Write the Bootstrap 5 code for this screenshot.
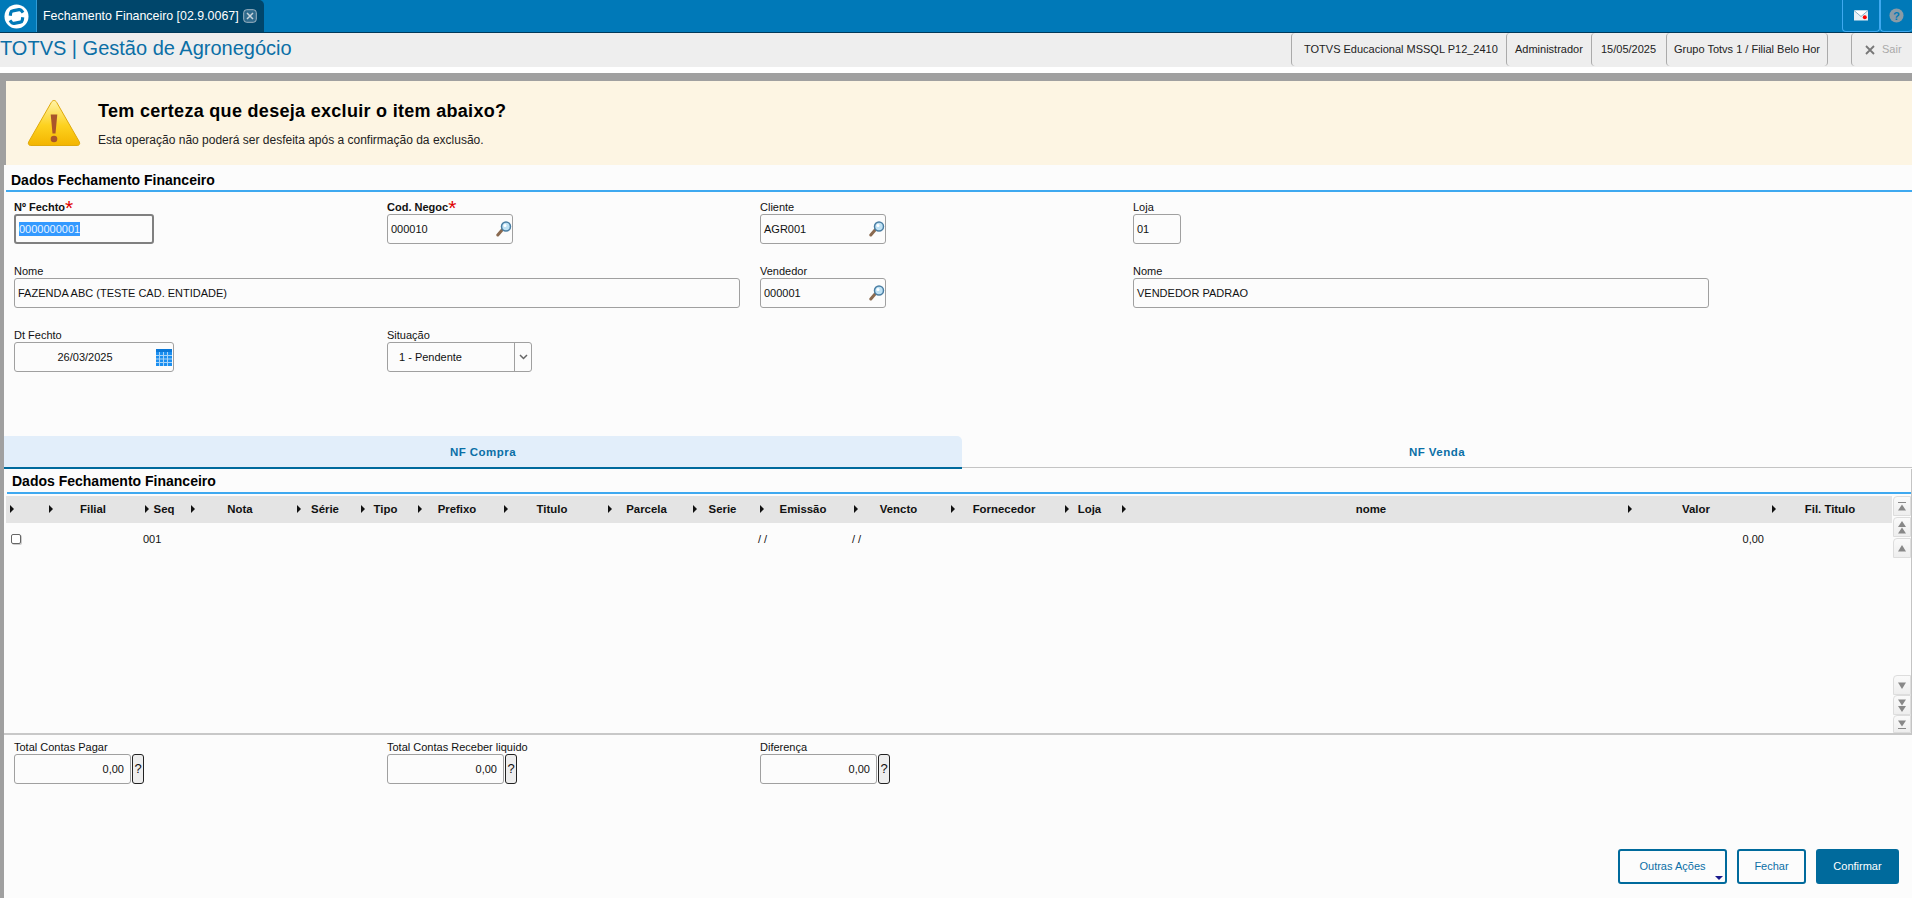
<!DOCTYPE html>
<html lang="pt-BR">
<head>
<meta charset="utf-8">
<title>Fechamento Financeiro</title>
<link href="https://cdn.jsdelivr.net/npm/bootstrap@5.3.0/dist/css/bootstrap.min.css" rel="stylesheet">
<style>
html,body{height:100%;}
body{font-family:"Liberation Sans",Arial,sans-serif;font-size:11px;color:#111;background:#fff;overflow:hidden;}
.topbar{height:33px;background:#0079b8;border-bottom:1px solid #00395a;}
.logo-box{width:36px;height:32px;padding-right:4px;}
.app-tab{width:228px;height:32px;background:#00466b;color:#fff;font-size:12.4px;padding-left:6px;border-radius:0 5px 0 0;gap:4px;border-left:1px solid #2f9bd6;}
.top-btn{height:32px;border:1px solid #3fa9f0;border-top:0;border-radius:0 0 4px 4px;}
.top-mail{width:38px;}
.top-help{width:32px;border-right:0;}
.subbar{height:34px;background:#eee;}
.sub-title{font-size:20px;color:#0b6fa6;line-height:30px;padding-top:0;white-space:nowrap;}
.sub-cell{height:33px;border-left:1px solid #aaa;border-radius:4px 0 0 4px;font-size:11px;color:#222;white-space:nowrap;overflow:hidden;padding-left:12px;}
.c1{width:215px;}.c2{width:85px;padding-left:8px;}.c3{width:75px;padding-left:9px;}.c4{width:162px;padding-left:7px;border-right:1px solid #aaa;border-radius:4px;}
.c5{width:61px;margin-left:23px;color:#aaa;padding-left:13px;gap:7px;}
.gap-white{height:6px;background:#fff;}
.workspace{height:825px;background:#a0a0a0;}
.grey-top{height:8px;}
.alert-strip{height:84px;background:#fdf5e3;margin-left:6px;gap:17px;padding-left:21px;}
.alert-title{font-size:18px;font-weight:700;letter-spacing:.3px;color:#000;line-height:22px;margin-bottom:11px;}
.alert-sub{font-size:12px;color:#222;line-height:14px;}
.sheet{height:733px;margin-left:4px;background:#fcfcfc;}
.sec-title{height:27px;border-bottom:2px solid #3fa9f0;margin-left:2px;font-size:14px;font-weight:700;color:#000;padding:7px 0 0 5px;line-height:17px;}
.form-zone{display:grid;grid-template-columns:repeat(4,373px);grid-auto-rows:44px;row-gap:20px;padding:8px 0 0 10px;height:244px;}
.span2{grid-column:span 2;}
.fld-label{display:block;margin:0;font-size:11px;line-height:14px;height:14px;color:#111;white-space:nowrap;}
.req{font-weight:700;}
.req i{color:#e00000;font-style:normal;font-size:21px;line-height:10px;font-weight:400;vertical-align:-4px;}
.fld{height:30px;min-height:30px;border:1px solid #a0a0a0;border-radius:3px;background:#fcfcfc;padding:0 3px;font-size:11px;color:#111;line-height:28px;white-space:nowrap;}
.w-140{width:140px;}.w-126{width:126px;}.w-48{width:48px;}.w-726{width:726px;}.w-576{width:576px;}.w-160{width:160px;}.w-145{width:145px;}.w-117{width:117px;}
.fld-strong{border:2px solid #808080;line-height:26px;}
.sel{background:#3399ff;color:#e8f4ff;padding:1px 0;}
.mag-ico{margin-right:-3px;}
.date-val{padding-right:4px;}
.cal-ico{margin-right:-2px;}
.sel-val{padding-left:8px;}
.sel-arrow{width:17px;border-left:1px solid #a0a0a0;height:100%;margin-right:-3px;}
.tab-row{height:33px;}
.tab-on,.tab-off{font-size:11.5px;font-weight:700;letter-spacing:.45px;color:#0b6fa6;padding-top:2px;}
.tab-on{width:958px;background:#e2eefa;border-bottom:2px solid #006a9c;border-radius:0 5px 0 0;}
.tab-off{flex:1;border-bottom:1px solid #c4c4c4;margin-bottom:1px;}
.grid-panel{height:266px;border-right:1px solid #c4c4c4;border-bottom:2px solid #c8c8c8;}
.sec-title2{height:25px;margin-left:3px;padding:4px 0 0 5px;}
.grid-body{height:239px;padding-top:2px;}
.grid-wrap{width:1888px;}
.data-grid{table-layout:fixed;width:1886px;margin:0 0 0 2px;border-collapse:collapse;}
.data-grid th{height:27px;padding:0;background:#e4e4e4;font-size:11.4px;font-weight:700;color:#111;text-align:center;border:0;white-space:nowrap;vertical-align:middle;}
.data-grid td{height:32px;padding:0 0 0 2px;font-size:11px;color:#111;background:transparent;border:0;vertical-align:middle;}
.tri{float:left;width:0;height:0;margin:4px -8px 0 4px;border-left:4px solid #111;border-top:4px solid transparent;border-bottom:4px solid transparent;}
.td-right{text-align:right;padding-right:4px!important;}
.ck{display:block;width:10px;height:10px;border:1px solid #666;border-radius:2px;background:#fff;margin-left:3px;box-shadow:1px 1px 0 #ccc;}
.scroll-col{width:18px;}
.scr{height:20px;width:18px;border:1px solid #ddd;border-radius:4px 0 0 0;background:linear-gradient(#fafafa,#eee);}
.scr-up{margin-bottom:1px;}
.scr-last{height:18px;}
.bot-zone{display:grid;grid-template-columns:repeat(4,373px);padding:5px 0 0 10px;height:114px;}
.help-btn{width:12px;height:30px;border:1px solid #222;border-radius:3px;background:#eee;font-size:13px;margin-left:1px;line-height:28px;text-align:center;color:#111;padding:0;}
.val-right{text-align:right;padding-right:6px;}
.foot{gap:10px;padding-right:13px;}
.act{height:35px;font-size:11px;border:2px solid #006a9c;border-radius:3px;color:#0b6fa6;background:#fcfcfc;padding:0;}
.act-a{width:109px;}
.act-b{width:69px;}
.act-c{width:83px;background:#006a9c;color:#fff;}
.act-wrap{position:relative;}
.caret-b{position:absolute;right:4px;bottom:4px;width:0;height:0;border-left:4px solid transparent;border-right:4px solid transparent;border-top:4px solid #1a1a8c;}
</style>
</head>
<body>
<div class="topbar d-flex">
  <div class="logo-box d-flex align-items-center justify-content-center">
    <svg width="25" height="25" viewBox="0 0 26 26"><circle cx="13" cy="13" r="12.500" fill="#fff"/><path d="M6.500 12.200L7 9.200Q7.300 7.500 9 7.200L15.500 5.900Q17.200 5.600 18.300 7L19.800 9" fill="none" stroke="#0079b8" stroke-width="3.300"/><path d="M19.500 13.800L19 16.800Q18.700 18.500 17 18.800L10.500 20.100Q8.800 20.400 7.700 19L6.200 17" fill="none" stroke="#0079b8" stroke-width="3.300"/></svg>
  </div>
  <div class="app-tab d-flex align-items-center">
    <span>Fechamento Financeiro [02.9.0067]</span>
    <svg width="14" height="14" viewBox="0 0 14 14"><rect x=".7" y=".7" width="12.600" height="12.600" rx="3" fill="#2f6a8c" stroke="#9fb4c2"/><path d="M4 4l6 6M10 4l-6 6" stroke="#c8d4dc" stroke-width="1.500"/></svg>
  </div>
  <div class="ms-auto d-flex">
    <div class="top-btn top-mail d-flex align-items-center justify-content-center">
      <svg width="14" height="11" viewBox="0 0 14 11"><rect y=".5" width="14" height="10" fill="#e6f0f6"/><path d="M0 .5l7 6 7-6" fill="#fff" stroke="#6f9db8" stroke-width=".8"/><circle cx="10.800" cy="7.200" r="2" fill="#f00"/></svg>
    </div>
    <div class="top-btn top-help d-flex align-items-center justify-content-center">
      <svg width="15" height="15" viewBox="0 0 16 16"><circle cx="8" cy="8" r="7.500" fill="#8a9ba6"/><text x="8" y="12.500" text-anchor="middle" font-family="Liberation Sans" font-weight="700" font-size="12" fill="#0079b8">?</text></svg>
    </div>
  </div>
</div>
<div class="subbar d-flex">
  <div class="sub-title">TOTVS | Gestão de Agronegócio</div>
  <div class="ms-auto d-flex">
    <div class="sub-cell c1 d-flex align-items-center">TOTVS Educacional MSSQL P12_2410</div>
    <div class="sub-cell c2 d-flex align-items-center">Administrador</div>
    <div class="sub-cell c3 d-flex align-items-center">15/05/2025</div>
    <div class="sub-cell c4 d-flex align-items-center">Grupo Totvs 1 / Filial Belo Hor</div>
    <div class="sub-cell c5 d-flex align-items-center">
      <svg width="10" height="10" viewBox="0 0 10 10"><path d="M1 1l8 8M9 1L1 9" stroke="#777" stroke-width="1.800"/></svg><span>Sair</span>
    </div>
  </div>
</div>
<div class="gap-white"></div>
<div class="workspace">
  <div class="grey-top"></div>
  <div class="alert-strip d-flex align-items-center">
    <svg width="54" height="48" viewBox="0 0 54 48">
      <defs><linearGradient id="wg" x1="0" y1="0" x2="0" y2="1"><stop offset="0" stop-color="#fff3a8"/><stop offset=".55" stop-color="#fdd21f"/><stop offset="1" stop-color="#f3b400"/></linearGradient></defs>
      <path d="M27 1.500c1.200 0 2 .7 2.700 1.900l22.600 39.400c1 1.900.1 3.700-2.100 3.700H3.800c-2.200 0-3.100-1.800-2.100-3.700L24.300 3.400C25 2.200 25.800 1.500 27 1.500z" fill="url(#wg)" stroke="#dfa90b"/>
      <path d="M23.700 15.500h6.600l-1.800 19h-3z" fill="#a9562a"/><circle cx="27" cy="40" r="3.300" fill="#a9562a"/>
    </svg>
    <div>
      <div class="alert-title">Tem certeza que deseja excluir o item abaixo?</div>
      <div class="alert-sub">Esta operação não poderá ser desfeita após a confirmação da exclusão.</div>
    </div>
  </div>
  <div class="sheet">
    <div class="sec-title">Dados Fechamento Financeiro</div>
    <div class="form-zone">
      <div><label class="fld-label req">Nº Fechto<i>*</i></label><div class="fld fld-strong w-140"><span class="sel">0000000001</span></div></div>
      <div><label class="fld-label req">Cod. Negoc<i>*</i></label><div class="fld w-126 d-flex align-items-center justify-content-between"><span>000010</span><svg class="mag-ico" width="16" height="16" viewBox="0 0 16 16"><use href="#mag"/></svg></div></div>
      <div><label class="fld-label">Cliente</label><div class="fld w-126 d-flex align-items-center justify-content-between"><span>AGR001</span><svg class="mag-ico" width="16" height="16" viewBox="0 0 16 16"><use href="#mag"/></svg></div></div>
      <div><label class="fld-label">Loja</label><div class="fld w-48">01</div></div>

      <div class="span2"><label class="fld-label">Nome</label><div class="fld w-726">FAZENDA ABC (TESTE CAD. ENTIDADE)</div></div>
      <div><label class="fld-label">Vendedor</label><div class="fld w-126 d-flex align-items-center justify-content-between"><span>000001</span><svg class="mag-ico" width="16" height="16" viewBox="0 0 16 16"><use href="#mag"/></svg></div></div>
      <div><label class="fld-label">Nome</label><div class="fld w-576">VENDEDOR PADRAO</div></div>

      <div><label class="fld-label">Dt Fechto</label><div class="fld w-160 d-flex align-items-center"><span class="flex-grow-1 text-center date-val">26/03/2025</span>
        <svg class="cal-ico" width="16" height="17" viewBox="0 0 16 17"><rect width="16" height="17" fill="#1b8ff0"/><rect y="0" width="16" height="3" fill="#0a78d8"/><path d="M0 6.500h16M0 10h16M0 13.500h16M3.500 3v14M7.500 3v14M11.500 3v14" stroke="#a8d4f8"/></svg></div></div>
      <div><label class="fld-label">Situação</label><div class="fld w-145 d-flex align-items-center"><span class="flex-grow-1 sel-val">1 - Pendente</span>
        <span class="sel-arrow d-flex align-items-center justify-content-center"><svg width="9" height="6" viewBox="0 0 9 6"><path d="M1 1l3.500 3.500L8 1" fill="none" stroke="#666" stroke-width="1.500"/></svg></span></div></div>
    </div>
    <div class="tab-row d-flex">
      <div class="tab-on d-flex align-items-center justify-content-center">NF Compra</div>
      <div class="tab-off d-flex align-items-center justify-content-center">NF Venda</div>
    </div>
    <div class="grid-panel">
      <div class="sec-title sec-title2">Dados Fechamento Financeiro</div>
      <div class="grid-body d-flex justify-content-between">
        <div class="grid-wrap">
          <table class="data-grid">
            <colgroup><col style="width:39px"><col style="width:96px"><col style="width:46px"><col style="width:106px"><col style="width:64px"><col style="width:57px"><col style="width:86px"><col style="width:104px"><col style="width:85px"><col style="width:67px"><col style="width:94px"><col style="width:97px"><col style="width:114px"><col style="width:57px"><col style="width:506px"><col style="width:144px"><col style="width:124px"></colgroup>
            <thead><tr>
              <th><span class="tri"></span>&nbsp;</th>
              <th><span class="tri"></span>Filial</th>
              <th><span class="tri"></span>Seq</th>
              <th><span class="tri"></span>Nota</th>
              <th><span class="tri"></span>Série</th>
              <th><span class="tri"></span>Tipo</th>
              <th><span class="tri"></span>Prefixo</th>
              <th><span class="tri"></span>Titulo</th>
              <th><span class="tri"></span>Parcela</th>
              <th><span class="tri"></span>Serie</th>
              <th><span class="tri"></span>Emissão</th>
              <th><span class="tri"></span>Vencto</th>
              <th><span class="tri"></span>Fornecedor</th>
              <th><span class="tri"></span>Loja</th>
              <th><span class="tri"></span>nome</th>
              <th><span class="tri"></span>Valor</th>
              <th><span class="tri"></span>Fil. Titulo</th>
            </tr></thead>
            <tbody><tr>
              <td><span class="ck"></span></td><td></td><td>001</td><td></td><td></td><td></td><td></td><td></td><td></td><td></td><td>/ /</td><td>/ /</td><td></td><td></td><td></td><td class="td-right">0,00</td><td></td>
            </tr></tbody>
          </table>
        </div>
        <div class="scroll-col d-flex flex-column justify-content-between">
          <div>
            <div class="scr scr-up d-flex align-items-center justify-content-center"><svg width="10" height="11" viewBox="0 0 10 11"><path d="M1 1.500h8" stroke="#888"/><path d="M5 3.500l4 6H1z" fill="#888"/></svg></div>
            <div class="scr scr-up d-flex align-items-center justify-content-center"><svg width="10" height="13" viewBox="0 0 10 13"><path d="M5 0l4 6H1zM5 6.500l4 6H1z" fill="#888"/></svg></div>
            <div class="scr d-flex align-items-center justify-content-center"><svg width="10" height="7" viewBox="0 0 10 7"><path d="M5 0l4 6.500H1z" fill="#888"/></svg></div>
          </div>
          <div>
            <div class="scr d-flex align-items-center justify-content-center"><svg width="10" height="7" viewBox="0 0 10 7"><path d="M5 7L1 .5h8z" fill="#888"/></svg></div>
            <div class="scr d-flex align-items-center justify-content-center"><svg width="10" height="13" viewBox="0 0 10 13"><path d="M5 6.500L1 .5h8zM5 13L1 7h8z" fill="#888"/></svg></div>
            <div class="scr scr-last d-flex align-items-center justify-content-center"><svg width="10" height="11" viewBox="0 0 10 11"><path d="M5 7.500L1 1.500h8z" fill="#888"/><path d="M1 9.500h8" stroke="#888"/></svg></div>
          </div>
        </div>
      </div>
    </div>
    <div class="bot-zone">
      <div><label class="fld-label">Total Contas Pagar</label><div class="d-flex"><div class="fld w-117 val-right">0,00</div><div class="help-btn">?</div></div></div>
      <div><label class="fld-label">Total Contas Receber liquido</label><div class="d-flex"><div class="fld w-117 val-right">0,00</div><div class="help-btn">?</div></div></div>
      <div><label class="fld-label">Diferença</label><div class="d-flex"><div class="fld w-117 val-right">0,00</div><div class="help-btn">?</div></div></div>
    </div>
    <div class="foot d-flex justify-content-end">
      <div class="act-wrap"><button type="button" class="btn act act-a">Outras Ações</button><span class="caret-b"></span></div>
      <button type="button" class="btn act act-b">Fechar</button>
      <button type="button" class="btn act act-c">Confirmar</button>
    </div>
  </div>
</div>
<svg width="0" height="0" class="d-block"><defs>
  <symbol id="mag" viewBox="0 0 16 16">
    <path d="M6.500 8.500L1.800 14" stroke="#8a6a50" stroke-width="3" stroke-linecap="round"/>
    <circle cx="10" cy="5.500" r="4.500" fill="#bfe2f5" stroke="#4a7ea3" stroke-width="1.500"/>
    <circle cx="9" cy="4.500" r="1.500" fill="#fff"/>
  </symbol>
</defs></svg>
</body>
</html>
